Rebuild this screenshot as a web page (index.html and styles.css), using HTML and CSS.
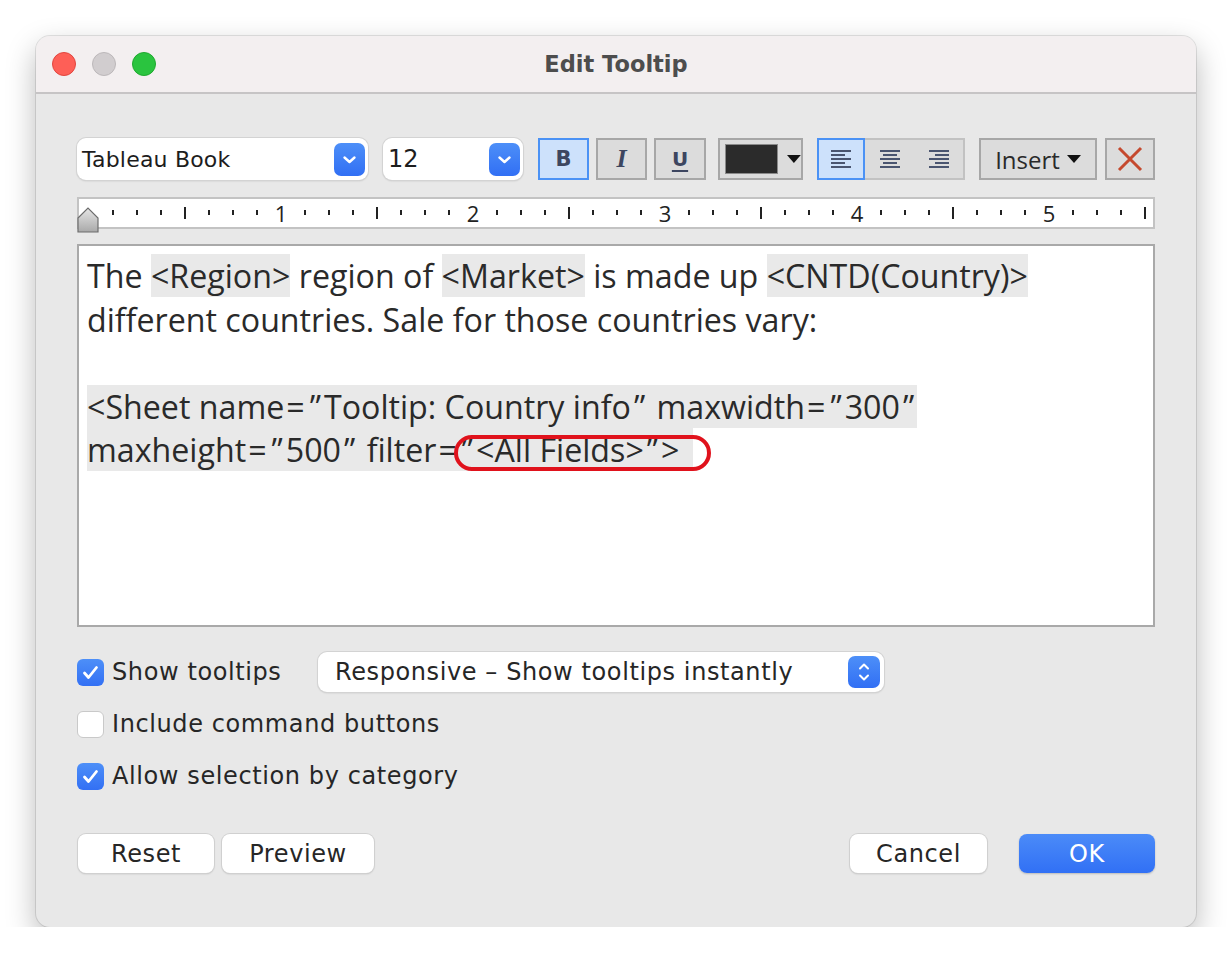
FILE: index.html
```html
<!DOCTYPE html>
<html lang="en">

<head>
  <meta charset="UTF-8">
  <meta name="viewport" content="width=device-width, initial-scale=1.0">
  <title>Edit Tooltip</title>
  <link rel="stylesheet" href="styles.css">
</head>

<body>
  <div class="window">
    <div class="titlebar">
      <div class="lights">
        <i class="light red"></i>
        <i class="light grey"></i>
        <i class="light green"></i>
      </div>
      <div class="title">Edit Tooltip</div>
      <div></div>
    </div>

    <div class="content">
      <!-- formatting toolbar -->
      <div class="toolbar">
        <div class="select font-select">
          <span>Tableau Book</span>
          <i class="chev"><svg width="31" height="33" viewBox="0 0 31 33"><path d="M10.5 14.5l5 4.5 5-4.5" fill="none" stroke="#fff" stroke-width="2.4" stroke-linecap="round" stroke-linejoin="round"/></svg></i>
        </div>
        <div class="select size-select">
          <span>12</span>
          <i class="chev"><svg width="31" height="33" viewBox="0 0 31 33"><path d="M10.5 14.5l5 4.5 5-4.5" fill="none" stroke="#fff" stroke-width="2.4" stroke-linecap="round" stroke-linejoin="round"/></svg></i>
        </div>
        <button class="tb on bold">B</button>
        <button class="tb italic">I</button>
        <button class="tb underline">U</button>
        <button class="tb color">
          <span class="swatch"></span>
          <svg width="14" height="8" viewBox="0 0 14 8"><path d="M0 0h14L7 8z" fill="#111"/></svg>
        </button>
        <div class="align-group">
          <button class="al on">
            <svg width="22" height="18" viewBox="0 0 22 18"><path d="M1 1h20M1 5h14M1 9h20M1 13h14M1 17h20" stroke="#4a5570" stroke-width="2"/></svg>
          </button>
          <button class="al">
            <svg width="22" height="18" viewBox="0 0 22 18"><path d="M1 1h20M4 5h14M1 9h20M4 13h14M1 17h20" stroke="#4a5570" stroke-width="2"/></svg>
          </button>
          <button class="al">
            <svg width="22" height="18" viewBox="0 0 22 18"><path d="M1 1h20M7 5h14M1 9h20M7 13h14M1 17h20" stroke="#4a5570" stroke-width="2"/></svg>
          </button>
        </div>
        <button class="tb insert">
          Insert
          <svg width="14" height="8" viewBox="0 0 14 8"><path d="M0 0h14L7 8z" fill="#111"/></svg>
        </button>
        <button class="tb clear">
          <svg width="26" height="26" viewBox="0 0 26 26"><path d="M2 2l22 22M24 2L2 24" stroke="#c5492e" stroke-width="3"/></svg>
        </button>
      </div>

      <!-- ruler -->
      <div class="ruler">
        <svg class="ticks" width="1074" height="28" viewBox="0 0 1074 28">
          <path d="M10 11v5M34 11v5M58 11v5M82 11v5M130 11v5M154 11v5M178 11v5M226 11v5M250 11v5M274 11v5M322 11v5M346 11v5M370 11v5M418 11v5M442 11v5M466 11v5M514 11v5M538 11v5M562 11v5M610 11v5M634 11v5M658 11v5M706 11v5M730 11v5M754 11v5M802 11v5M826 11v5M850 11v5M898 11v5M922 11v5M946 11v5M994 11v5M1018 11v5M1042 11v5" stroke="#222" stroke-width="2"/>
          <path d="M106 8v12M298 8v12M490 8v12M682 8v12M874 8v12M1066 8v12" stroke="#222" stroke-width="2"/>
          <g class="nums" text-anchor="middle">
            <text x="202" y="23">1</text>
            <text x="394" y="23">2</text>
            <text x="586" y="23">3</text>
            <text x="778" y="23">4</text>
            <text x="970" y="23">5</text>
          </g>
        </svg>
        <svg class="tab-marker" width="22" height="26" viewBox="0 0 22 26">
          <defs>
            <linearGradient id="mk" x1="0" y1="0" x2="0" y2="1">
              <stop offset="0" stop-color="#e6e6e6"/>
              <stop offset="1" stop-color="#a9a9a9"/>
            </linearGradient>
          </defs>
          <path d="M1 11L11 1l10 10v14H1z" fill="url(#mk)" stroke="#6d6d6d" stroke-width="1.2"/>
        </svg>
      </div>

      <!-- tooltip text -->
      <div class="editor">
        <div class="line">The <span class="field">&lt;Region&gt;</span> region of <span class="field">&lt;Market&gt;</span> is made up <span class="field">&lt;CNTD(Country)&gt;</span></div>
        <div class="line">different countries. Sale for those countries vary:</div>
        <div class="line">&nbsp;</div>
        <div class="line"><span class="field">&lt;Sheet name<span class="eq">=</span><span class="q">”</span>Tooltip: Country info<span class="q">”</span> maxwidth<span class="eq">=</span><span class="q">”</span>300<span class="q">”</span></span></div>
        <div class="line"><span class="field">maxheight<span class="eq">=</span><span class="q">”</span>500<span class="q">”</span> filter<span class="eq">=</span><span class="ring"><span class="q">”</span>&lt;All Fields&gt;<span class="q">”</span>&gt;</span></span></div>
      </div>

      <!-- options -->
      <div class="options">
        <div class="opt-row">
          <i class="check on"><svg width="27" height="27" viewBox="0 0 27 27"><path d="M7.5 14l4 4.5 8-10" fill="none" stroke="#fff" stroke-width="2.8" stroke-linecap="round" stroke-linejoin="round"/></svg></i>
          <span class="label first">Show tooltips</span>
          <div class="select popup">
            <span>Responsive – Show tooltips instantly</span>
            <i class="stepper"><svg width="32" height="32" viewBox="0 0 32 32"><path d="M12 12.5l4-4 4 4M12 19.5l4 4 4-4" fill="none" stroke="#fff" stroke-width="2" stroke-linecap="round" stroke-linejoin="round"/></svg></i>
          </div>
        </div>
        <div class="opt-row">
          <i class="check"></i>
          <span class="label">Include command buttons</span>
        </div>
        <div class="opt-row">
          <i class="check on"><svg width="27" height="27" viewBox="0 0 27 27"><path d="M7.5 14l4 4.5 8-10" fill="none" stroke="#fff" stroke-width="2.8" stroke-linecap="round" stroke-linejoin="round"/></svg></i>
          <span class="label">Allow selection by category</span>
        </div>
      </div>

      <div class="actions">
        <button class="btn reset">Reset</button>
        <button class="btn preview">Preview</button>
        <span class="spacer"></span>
        <button class="btn cancel">Cancel</button>
        <button class="btn ok">OK</button>
      </div>
    </div>
  </div>
</body>

</html>
```

FILE: styles.css
```css
body {
  margin: 0;
  background: #fff;
  font-family: "DejaVu Sans", sans-serif;
  color: #2b2b2b;
}

button {
  font-family: inherit;
  padding: 0;
  cursor: pointer;
}

.window {
  width: 1160px;
  height: 891px;
  margin: 36px 0 0 36px;
  overflow: hidden;
  border-radius: 14px;
  background: #e8e8e8;
  box-shadow: 0 12px 30px rgba(0, 0, 0, 0.28), 0 0 0 1px rgba(0, 0, 0, 0.1);
}

/* ---------- title bar ---------- */
.titlebar {
  display: grid;
  grid-template-columns: 1fr auto 1fr;
  align-items: center;
  height: 56px;
  background: #f3eff0;
  border-bottom: 2px solid #c6c4c5;
}

.lights {
  display: flex;
  gap: 16px;
  padding-left: 16px;
}

.light {
  width: 22px;
  height: 22px;
  border-radius: 50%;
  border: 1px solid;
}

.light.red {
  background: #fe5f57;
  border-color: #e1463f;
}

.light.grey {
  background: #d1cdcf;
  border-color: #bcb8ba;
}

.light.green {
  background: #2ac43f;
  border-color: #1fa92f;
}

.title {
  font-size: 22.5px;
  font-weight: bold;
  color: #4d4d4d;
}

/* ---------- body ---------- */
.content {
  padding: 44px 41px 0;
}

.toolbar {
  display: flex;
  align-items: center;
  height: 42px;
}

.select {
  display: flex;
  align-items: center;
  justify-content: space-between;
  box-sizing: border-box;
  height: 42px;
  padding: 0 3px 0 5px;
  background: #fff;
  border-radius: 9px;
  box-shadow: 0 0 0 1px #d3d3d3, 0 1px 2px rgba(0, 0, 0, 0.18);
  font-size: 22px;
  letter-spacing: 0.2px;
  color: #1d1d1d;
}

.font-select {
  width: 291px;
}

.size-select {
  width: 140px;
  margin-left: 15px;
  font-size: 24px;
  letter-spacing: 0;
}

.chev {
  display: flex;
  width: 31px;
  height: 33px;
  border-radius: 7px;
  background: linear-gradient(#4d8ff8, #316ff4);
}

.tb {
  box-sizing: border-box;
  height: 42px;
  border: 2px solid #a7a7a7;
  background: #dcdcdc;
  color: #3d4660;
}

.tb.on {
  border-color: #4b92f5;
  background: #cde1fb;
}

.bold {
  width: 51px;
  margin-left: 15px;
  font-size: 21px;
  font-weight: bold;
}

.italic {
  width: 51px;
  margin-left: 7px;
  font-family: "Liberation Serif", serif;
  font-style: italic;
  font-weight: bold;
  font-size: 26px;
}

.underline {
  width: 52px;
  margin-left: 7px;
  font-size: 20px;
  font-weight: bold;
  text-decoration: underline;
  text-underline-offset: 4px;
  text-decoration-thickness: 2px;
}

.color {
  display: flex;
  align-items: center;
  gap: 9px;
  width: 85px;
  margin-left: 12px;
  padding-left: 5px;
}

.swatch {
  width: 52px;
  height: 28px;
  background: #2b2b2b;
  border: 1px solid #8a8a8a;
}

.align-group {
  display: flex;
  box-sizing: border-box;
  width: 148px;
  height: 42px;
  margin-left: 14px;
  border: 2px solid #c2c2c2;
  background: #dcdcdc;
}

.al {
  display: flex;
  align-items: center;
  justify-content: center;
  flex: 1;
  border: none;
  background: none;
}

.al.on {
  flex: 0 0 48px;
  margin: -2px 0 -2px -2px;
  border: 2px solid #4b92f5;
  background: #cde1fb;
}

.insert {
  display: flex;
  align-items: center;
  justify-content: center;
  gap: 7px;
  width: 118px;
  margin-left: 14px;
  font-family: "Open Sans", sans-serif;
  font-size: 24px;
  color: #2a2a2a;
}

.clear {
  display: flex;
  align-items: center;
  justify-content: center;
  width: 50px;
  margin-left: 8px;
}

/* ---------- ruler ---------- */
.ruler {
  position: relative;
  box-sizing: border-box;
  height: 32px;
  margin-top: 17px;
  background: #fff;
  border: 2px solid #c3c3c3;
}

.ticks {
  display: block;
}

.nums text {
  font-family: "Open Sans", sans-serif;
  font-size: 22px;
  fill: #222;
}

.tab-marker {
  position: absolute;
  left: -2px;
  top: 8px;
}

/* ---------- editor ---------- */
.editor {
  box-sizing: border-box;
  height: 383px;
  margin-top: 15px;
  padding: 8px 8px;
  background: #fff;
  border: 2px solid #a9a9a9;
  font-family: "Open Sans", sans-serif;
  font-size: 32.2px;
  line-height: 43.5px;
  color: #2a2a2a;
  white-space: nowrap;
}

.field {
  background: #e9e9e9;
}

.editor .q {
  margin: 0 3px;
}

.editor .eq {
  margin: 0 2px;
}

.ring {
  position: relative;
  padding-right: 14px;
}

.ring::after {
  content: "";
  position: absolute;
  left: -5px;
  right: -18px;
  top: 7px;
  bottom: 0;
  border: 4px solid #e0121c;
  border-radius: 20px;
}

/* ---------- options ---------- */
.options {
  display: flex;
  flex-direction: column;
  gap: 12px;
  margin-top: 25px;
}

.opt-row {
  display: flex;
  align-items: center;
  height: 40px;
}

.check {
  box-sizing: border-box;
  display: flex;
  width: 27px;
  height: 27px;
  margin-right: 8px;
  border-radius: 6px;
  background: #fff;
  border: 1px solid #c9c9c9;
}

.check.on {
  border: none;
  background: linear-gradient(#4d8ff8, #3370f4);
}

.label {
  font-size: 24px;
  letter-spacing: 0.6px;
  color: #262626;
}

.label.first {
  width: 206px;
}

.popup {
  width: 566px;
  height: 40px;
  padding: 0 4px 0 17px;
  font-size: 24px;
  letter-spacing: 0.6px;
  color: #262626;
}

.stepper {
  display: flex;
  width: 32px;
  height: 32px;
  border-radius: 7px;
  background: linear-gradient(#4d8ff8, #316ff4);
}

/* ---------- buttons ---------- */
.actions {
  display: flex;
  margin-top: 38px;
}

.spacer {
  flex: 1;
}

.btn {
  height: 39px;
  border: none;
  border-radius: 8px;
  background: #fff;
  box-shadow: 0 0 0 1px #d0d0d0, 0 1px 2px rgba(0, 0, 0, 0.2);
  font-size: 24px;
  letter-spacing: 0.6px;
  color: #262626;
}

.reset {
  width: 136px;
  margin-left: 1px;
}

.preview {
  width: 152px;
  margin-left: 8px;
}

.cancel {
  width: 137px;
}

.ok {
  width: 136px;
  margin-left: 32px;
  background: linear-gradient(#4b8bf8, #3170f5);
  box-shadow: 0 1px 2px rgba(0, 0, 0, 0.2);
  color: #fff;
}
```
